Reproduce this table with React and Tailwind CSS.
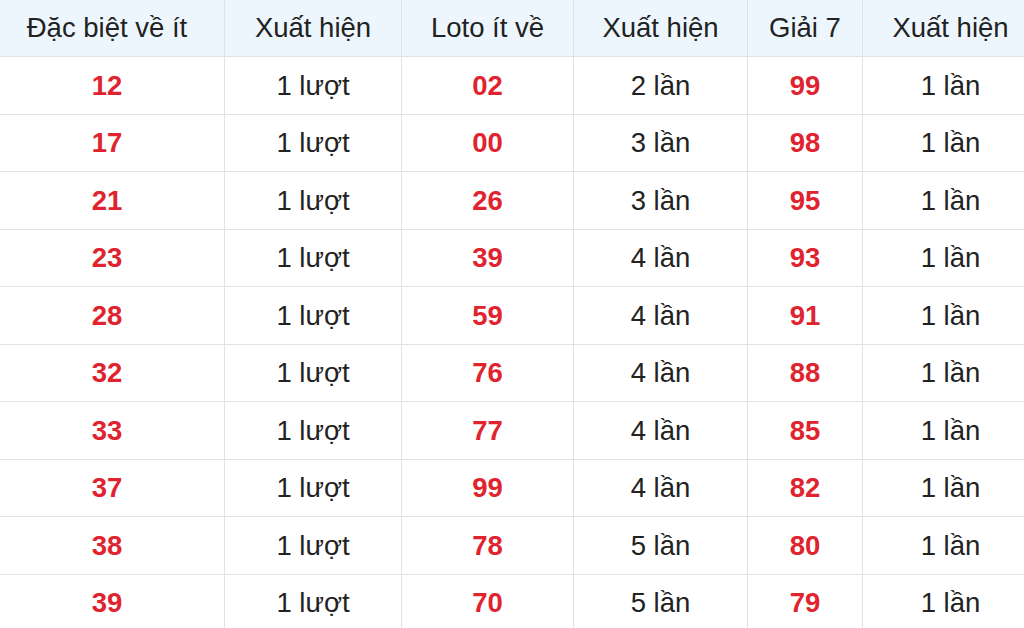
import React from 'react';

const rows = [
  ['12', '1 lượt', '02', '2 lần', '99', '1 lần'],
  ['17', '1 lượt', '00', '3 lần', '98', '1 lần'],
  ['21', '1 lượt', '26', '3 lần', '95', '1 lần'],
  ['23', '1 lượt', '39', '4 lần', '93', '1 lần'],
  ['28', '1 lượt', '59', '4 lần', '91', '1 lần'],
  ['32', '1 lượt', '76', '4 lần', '88', '1 lần'],
  ['33', '1 lượt', '77', '4 lần', '85', '1 lần'],
  ['37', '1 lượt', '99', '4 lần', '82', '1 lần'],
  ['38', '1 lượt', '78', '5 lần', '80', '1 lần'],
  ['39', '1 lượt', '70', '5 lần', '79', '1 lần'],
];

const headers = ['Đặc biệt về ít', 'Xuất hiện', 'Loto ít về', 'Xuất hiện', 'Giải 7', 'Xuất hiện'];

// table is wider than the viewport, cropped on both sides
const cols = 'grid grid-cols-[234px_177px_172px_174px_115px_176px]';

const App = () => {
  return (
    <div className="w-[1024px] h-[628px] overflow-hidden bg-white font-['Liberation_Sans',Arial,sans-serif]">
      <div className="w-[1048px] -ml-[10px]">
        <div className={`${cols} h-[57px] bg-[#eef6fd] border-b border-[#e2e2e2]`}>
          {headers.map((h, i) => (
            <div
              key={i}
              className={`flex items-center justify-center text-[27.5px] text-[#222] ${i > 0 ? 'border-l border-[#e2e2e2]' : ''}`}
            >
              {h}
            </div>
          ))}
        </div>
        {rows.map((r, ri) => (
          <div key={ri} className={`${cols} h-[57.5px] border-b border-[#e2e2e2]`}>
            {r.map((c, ci) => (
              <div
                key={ci}
                className={`flex items-center justify-center text-[27.5px] ${ci > 0 ? 'border-l border-[#e2e2e2]' : ''} ${ci % 2 === 0 ? 'font-bold text-[#e0242f]' : 'text-[#222]'}`}
              >
                {c}
              </div>
            ))}
          </div>
        ))}
      </div>
    </div>
  );
};

export default App;
